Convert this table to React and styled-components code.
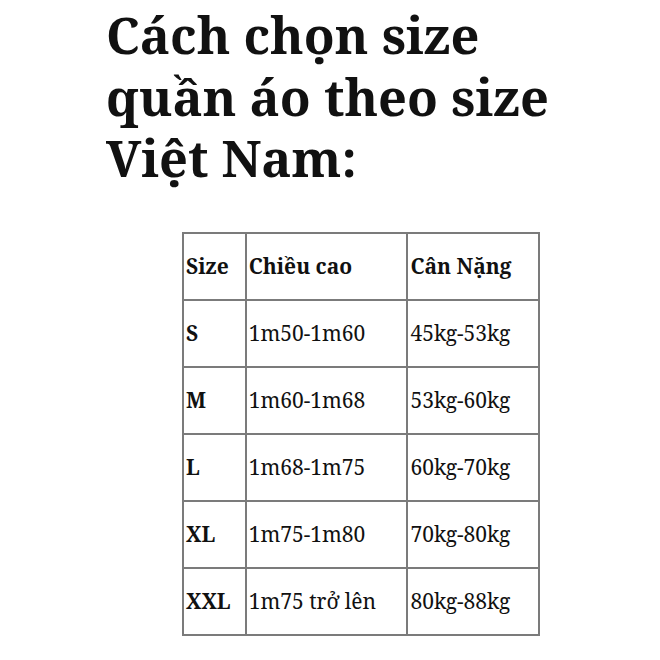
import React from "react";
import styled, { createGlobalStyle } from "styled-components";

const Global = createGlobalStyle`
  html, body { margin: 0; padding: 0; background: #fff; }
  body { font-family: "Noto Serif", "DejaVu Serif", "Liberation Serif", serif; color: #111; }
`;

const Page = styled.div`
  width: 660px;
  height: 660px;
  box-sizing: border-box;
  padding: 4px 0 0 106px;
  overflow: hidden;
`;

const Title = styled.h1`
  margin: 0;
  font-size: 50.5px;
  line-height: 61.5px;
  font-weight: 700;
  color: #111;
  white-space: nowrap;
`;

const TableWrap = styled.div`
  margin: 43px 0 0 76px;
`;

const Table = styled.table`
  border-collapse: collapse;
  width: 358px;
  font-size: 21px;
`;

const Cell = styled.td`
  border: 2px solid #7b7b7b;
  height: 65px;
  padding: 0 1px 0 2px;
  width: ${(p) => p.$w}px;
  font-weight: ${(p) => (p.$bold ? 700 : 400)};
  vertical-align: middle;
  white-space: nowrap;
`;

const rows = [
  ["S", "1m50-1m60", "45kg-53kg"],
  ["M", "1m60-1m68", "53kg-60kg"],
  ["L", "1m68-1m75", "60kg-70kg"],
  ["XL", "1m75-1m80", "70kg-80kg"],
  ["XXL", "1m75 trở lên", "80kg-88kg"],
];

export default function App() {
  return (
    <>
      <Global />
      <Page>
        <Title>
          Cách chọn size
          <br />
          quần áo theo size
          <br />
          Việt Nam:
        </Title>
        <TableWrap>
          <Table>
            <tbody>
              <tr>
                <Cell $w={60} $bold>Size</Cell>
                <Cell $w={162} $bold>Chiều cao</Cell>
                <Cell $w={131} $bold>Cân Nặng</Cell>
              </tr>
              {rows.map((r) => (
                <tr key={r[0]}>
                  <Cell $bold>{r[0]}</Cell>
                  <Cell>{r[1]}</Cell>
                  <Cell>{r[2]}</Cell>
                </tr>
              ))}
            </tbody>
          </Table>
        </TableWrap>
      </Page>
    </>
  );
}
